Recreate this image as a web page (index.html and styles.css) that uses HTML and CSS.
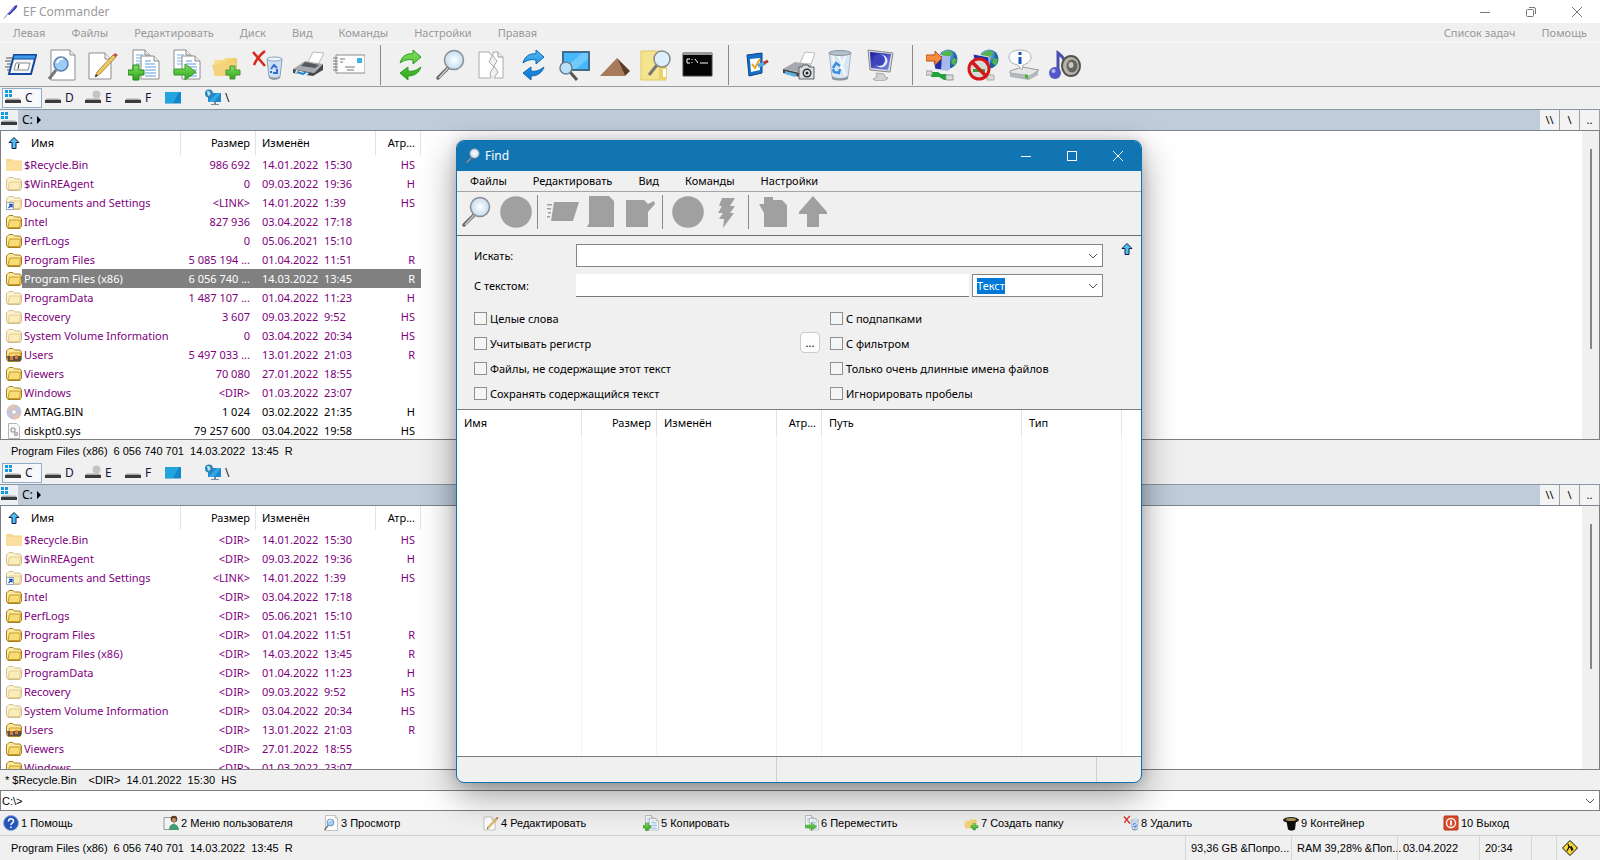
FILE: index.html
```html
<!DOCTYPE html>
<html lang="ru">
<head>
<meta charset="utf-8">
<title>EF Commander</title>
<link rel="stylesheet" href="styles.css">
</head>
<body>
<svg class="sprite" aria-hidden="true">
  <defs>
    <linearGradient id="gGreen" x1="0" y1="0" x2="0" y2="1"><stop offset="0" stop-color="#7de25c"/><stop offset="1" stop-color="#2fa51c"/></linearGradient>
    <linearGradient id="gBlue" x1="0" y1="0" x2="0" y2="1"><stop offset="0" stop-color="#4db8f5"/><stop offset="1" stop-color="#0a72cc"/></linearGradient>
    <linearGradient id="gFold" x1="0" y1="0" x2="1" y2="1"><stop offset="0" stop-color="#fbe69a"/><stop offset="1" stop-color="#e9b93c"/></linearGradient>
    <linearGradient id="gNight" x1="0" y1="0" x2="1" y2="1"><stop offset="0" stop-color="#16189a"/><stop offset="1" stop-color="#7f8ce8"/></linearGradient>
    <radialGradient id="gLens"><stop offset="0" stop-color="#ffffff"/><stop offset="1" stop-color="#c3ddf1"/></radialGradient>
    <radialGradient id="gGlobe" cx=".4" cy=".3"><stop offset="0" stop-color="#9fe0f5"/><stop offset="1" stop-color="#1560a8"/></radialGradient>
  </defs>
  <symbol id="pen" viewBox="0 0 16 16"><path d="M1 14.500 5 9.500" stroke="#8a93a8" stroke-width="1"/><path d="M4.500 10 11.500 2 14.500 1 13.500 4 6.500 11Z" fill="#2c35b5"/><path d="m6 9 6-6" stroke="#8f9bf0" stroke-width=".8"/></symbol>
  <symbol id="run" viewBox="0 0 32 32"><path d="M1 9h6M0 12h6M2 15h4M0 18h5M2 21h3" stroke="#555"/><path d="M9 6h22l-5 19H4z" fill="#f4f8fc" stroke="#17479c" stroke-width="2"/><path d="M9 6h22l-1 4H8z" fill="#3d9be8" stroke="#17479c"/><path d="M11 14h14l-2 7H9z" fill="#fff" stroke="#888"/><path d="m14 15-1 5" stroke="#333"/></symbol>
  <symbol id="view" viewBox="0 0 32 32"><path d="M5 1h19l5 5v25H5z" fill="#fff" stroke="#8c8c8c"/><path d="M24 1v5h5" fill="#eee" stroke="#8c8c8c"/><path d="M3 30 10 21" stroke="#777" stroke-width="3"/><circle cx="15" cy="15" r="7" fill="#9ccdf6" stroke="#5b7ea6" stroke-width="1.500"/><path d="M11 14a5 5 0 0 1 6-4" stroke="#fff" stroke-width="2" fill="none"/></symbol>
  <symbol id="edit" viewBox="0 0 32 32"><path d="M2 4h16l6 6v20H2z" fill="#fff" stroke="#8c8c8c"/><path d="M18 4v6h6" fill="#eee" stroke="#8c8c8c"/><path d="m8 28 2-5L26 6l3 2-16 17z" fill="#f2c75c" stroke="#8f7434" stroke-width=".8"/><path d="m26 6 2-2 3 2-2 2z" fill="#c8504a"/><path d="m8 28 1-3 2 2z" fill="#333"/></symbol>
  <symbol id="pages" viewBox="0 0 32 32"><path d="M5 1h12l5 5v18H5z" fill="#fff" stroke="#8c8c8c"/><path d="M17 1v5h5" fill="#eee" stroke="#8c8c8c"/><path d="M8 6h7M8 9h11M8 12h11M8 15h8" stroke="#7fb0e4"/><path d="M13 7h13l5 5v18H13z" fill="#fff" stroke="#8c8c8c"/><path d="M26 7v5h5" fill="#eee" stroke="#8c8c8c"/><path d="M17 12h6M17 15h10M17 18h11M17 21h11M17 24h11M17 27h11" stroke="#5b9be0"/></symbol>
  <symbol id="copy" viewBox="0 0 32 32"><use href="#pages"/><path d="M5 16h6v5h5v5h-5v5H5v-5H0v-5h5z" fill="url(#gGreen)" stroke="#23861a"/></symbol>
  <symbol id="move" viewBox="0 0 32 32"><use href="#pages"/><path d="M5 20h11v-5l11 8-11 8v-5H5z" fill="url(#gGreen)" stroke="#3b9a30"/></symbol>
  <symbol id="newdir" viewBox="0 0 32 32"><path d="M4 11h9l3-2h11v17H4z" fill="url(#gFold)"/><path d="m2 16 24-3v14H5z" fill="#f4d27c"/><path d="M20 17h5v4h5v5h-5v4h-5v-4h-4v-5h4z" fill="url(#gGreen)" stroke="#4a9440"/></symbol>
  <symbol id="bin" viewBox="0 0 32 32"><path d="M5 4h22l-3 24c-4 3-12 3-16 0z" fill="#d9e5f1" stroke="#a9b7c5"/><path d="m9 6 2 18M14 6l4 8-3 12M22 6l-4 10 3 10" stroke="#f4f9fd" stroke-width="2" fill="none"/><ellipse cx="16" cy="4" rx="11" ry="2.500" fill="#b4bfca" stroke="#8a97a3"/><path d="m9 19 3-5 4 3M16 20l-1 4-5-1-1-3" fill="none" stroke="#3a8ee0" stroke-width="2.500"/><path d="M8 27c4 3 12 3 16 0v3c-4 2-12 2-16 0z" fill="#8d97a0"/></symbol>
  <symbol id="delete" viewBox="0 0 32 32"><path d="m2 3 12 14M14 2C9 6 5 11 3 16" stroke="#d8281e" stroke-width="2.500" fill="none"/><path d="M16 10h15l-2 18c-3 3-9 3-11 0z" fill="#cfe0f5" stroke="#8ba2bb"/><ellipse cx="23.500" cy="10" rx="7.500" ry="2" fill="#eef4fb" stroke="#8ba2bb"/><path d="m20 20 3-4 3 3M26 20v4h-4M20 22v2" stroke="#2f6fd0" stroke-width="2" fill="none"/><path d="M18 27c3 2 8 2 11 0v2c-3 2-8 2-11 0z" fill="#9098a0"/></symbol>
  <symbol id="print" viewBox="0 0 32 32"><path d="m16 13 5-10 11 1-6 12z" fill="#fff" stroke="#bbb"/><path d="m1 20 12-8 18 3-9 9z" fill="#a5a9ad"/><path d="m13 13 14 3-4 3-14-2z" fill="#55595e"/><path d="m1 20 21 4 9-9v6l-10 6-20-3z" fill="#44474c"/><path d="m4 21 13 3-3 3-11-3z" fill="#dff0fb"/><path d="m5 23 6 2 3-2" stroke="#2284cc" stroke-width="2" fill="none"/></symbol>
  <symbol id="mail" viewBox="0 0 32 32"><path d="M3 6h29v18H3z" fill="#fdfdfd" stroke="#8c8c8c"/><path d="M0 9h5M0 12h5M0 15h5M0 18h5M0 21h5M7 10h5M7 13h3M12 18h10M14 21h7" stroke="#777"/><path d="M24 9h5v5h-5z" fill="#3eb2e4"/></symbol>
  <symbol id="cycle" viewBox="0 0 32 32"><path d="M6 14C8 7 13 4 19 5V1l8 7-8 7v-4c-5-1-9 0-13 3zM27 18c-2 6-7 9-13 9v4L6 24l8-6v4c5 1 9-1 13-4z"/></symbol>
  <symbol id="lens" viewBox="0 0 32 32"><path d="M3 29 14 18" stroke="#666" stroke-width="3.500" stroke-linecap="round"/><path d="M4 29 13 19" stroke="#ccc" stroke-width="1.500"/><circle cx="19" cy="11" r="9.500" fill="url(#gLens)" stroke="#8a8d92" stroke-width="1.500"/></symbol>
  <symbol id="split" viewBox="0 0 32 32"><path d="M3 3h10l3 4-3 6 5 5-4 6 1 5H3z" fill="#fff" stroke="#aaa"/><path d="M17 3h5l5 5v21h-9l4-6-4-6 3-5-4-5z" fill="#fff" stroke="#aaa"/><path d="M22 3v5h5" fill="#eee" stroke="#999"/></symbol>
  <symbol id="desk" viewBox="0 0 32 32"><path d="M5 3h26v18H5z" fill="#46b7fa" stroke="#426c8c" stroke-width="2"/><path d="M6 20 24 4h6v6L18 20z" fill="#6fcafd"/><path d="m12 23 7 8" stroke="#555" stroke-width="3"/><circle cx="8" cy="19" r="6" fill="#b8e1f8" stroke="#6b7f90" stroke-width="1.500"/></symbol>
  <symbol id="pyramid" viewBox="0 0 32 32"><path d="M18 9 1 27h25z" fill="#a8795a"/><path d="m18 9 13 13-5 5z" fill="#5c3c26"/></symbol>
  <symbol id="foldfind" viewBox="0 0 32 32"><path d="M1 2h18l7 4v25H1z" fill="#f4e48e" stroke="#ddc865"/><path d="M19 12h8v16l-4 3h-4z" fill="#e9d267"/><path d="M23 20h3v8h-3z" fill="#fff"/><path d="m9 26 8-10" stroke="#777" stroke-width="3"/><circle cx="22" cy="10" r="8" fill="#dceffa" stroke="#888" stroke-width="1.500"/></symbol>
  <symbol id="console" viewBox="0 0 32 32"><path d="M2 4h29v23H2z" fill="#050505" stroke="#444"/><path d="M2 4h29v2H2z" fill="#999"/><path d="M9 10H6v4h3M11 10v1M11 13v1M14 10l3 4M19 14h8" stroke="#fff" fill="none"/></symbol>
  <symbol id="check" viewBox="0 0 32 32"><path d="m5 6 15-2v20L7 27z" fill="#1671c8" stroke="#0d3f82"/><path d="m8 10 10-1v12L9 23z" fill="#fff"/><path d="m10 15 3 4 5-9" stroke="#e8a520" stroke-width="2" fill="none"/><path d="m16 17 7-3" stroke="#5ba3dc" stroke-width="4"/><path d="m22 14 4-2" stroke="#b6362c" stroke-width="3"/></symbol>
  <symbol id="printcam" viewBox="0 0 32 32"><path d="m17 14 5-11 10 1-4 11z" fill="#fff" stroke="#bbb"/><path d="m0 20 12-7 17 3-9 8z" fill="#a5a9ad"/><path d="m0 20 17 4v4L0 24z" fill="#444"/><path d="m2 22 12 3-2 3-10-3z" fill="#5db0e6"/><path d="M16 18h3l1-2h5l1 2h5v12H16z" fill="#d9dde1" stroke="#5d6268"/><circle cx="24" cy="24" r="4.500" fill="#333"/><circle cx="24" cy="24" r="3" fill="#e2e6ea"/><circle cx="24" cy="24" r="1.500" fill="#222"/></symbol>
  <symbol id="monitor" viewBox="0 0 32 32"><path d="m11 24 8 1 1 3 3 1c0 3-13 4-15 1l4-2z" fill="#d0d3d6" stroke="#aaa"/><path d="m3 1 25 3-3 19-20-2z" fill="#d9dce0" stroke="#888"/><path d="m5 3 21 2-3 16-17-2z" fill="url(#gNight)"/><circle cx="16" cy="12" r="6.500" fill="#e2e8ff"/><circle cx="14" cy="11" r="6" fill="#3e44bb"/></symbol>
  <symbol id="globe" viewBox="0 0 32 32"><circle cx="22" cy="10" r="9.500" fill="url(#gGlobe)"/><path d="M16 4c4-3 8-3 11 0l-4 4-4 5-4-2zM27 9l4 1-2 7-4-3z" fill="#55b34a"/><path d="m6 5 16 3v14L9 20z" fill="#1d2fa8" stroke="#dfe3ea"/></symbol>
  <symbol id="netgo" viewBox="0 0 32 32"><use href="#globe"/><path d="M16 7h8v14h-9z" fill="#a9b8ee"/><path d="M0 6h9V2l7 7-7 7v-4H0z" fill="#f58a3c" stroke="#c7521a"/><path d="M5 23h7l3 2h5l4 3v3h-6l-5-3H5z" fill="#1fa43b"/><path d="M0 22h6v4H0zM20 26h7v5h-7z" fill="#d8dcd8" stroke="#999"/></symbol>
  <symbol id="netno" viewBox="0 0 32 32"><use href="#globe"/><path d="M20 26h7v5h-7z" fill="#d8dcd8" stroke="#aaa"/><circle cx="12" cy="20" r="10" fill="#d8dcd6" stroke="#d3191c" stroke-width="3"/><path d="M6 20h12v3H6z" fill="#2fa53b"/><path d="m5 13 14 14" stroke="#d3191c" stroke-width="3.500"/></symbol>
  <symbol id="info" viewBox="0 0 32 32"><path d="m2 22 12-4 17 3-9 6-20-3z" fill="#e5e7e8" stroke="#999"/><path d="m2 24 19 3 9-5v4l-9 5-19-3z" fill="#b4b8ba"/><path d="m17 25 3 1v4l-3-1z" fill="#49b53a"/><path d="M12 1c7 0 11 3 11 7s-4 7-8 8l-1 5-4-5C4 15 1 12 1 8s4-7 11-7z" fill="#fbfcfd" stroke="#aab0b5"/><path d="M12 3v3M12 8v7" stroke="#1f55b5" stroke-width="3"/></symbol>
  <symbol id="audio" viewBox="0 0 32 32"><path d="M9 24V4c4 3 7 6 7 11" fill="none" stroke="#4c4fae" stroke-width="3"/><circle cx="6" cy="24" r="6" fill="#5457c5"/><circle cx="4.500" cy="22" r="2" fill="#b8baf4"/><ellipse cx="22" cy="17" rx="9" ry="10" fill="#b6b4ac" stroke="#55534e" stroke-width="2"/><ellipse cx="23" cy="17" rx="5.500" ry="6.500" fill="#66645f"/><ellipse cx="22" cy="16" rx="2.500" ry="3" fill="#c8c6bf"/></symbol>
  <symbol id="drive" viewBox="0 0 16 16"><path d="M2 9.500h12l2 1.500H0z" fill="#aaa"/><path d="M0 11h16v3H0z" fill="#3b3b3b"/></symbol>
  <symbol id="drivec" viewBox="0 0 16 16"><use href="#drive"/><path d="M0 1h3v3H0zM4 1h3v3H4zM0 5h3v3H0zM4 5h3v3H4z" fill="#149ae0"/></symbol>
  <symbol id="drivee" viewBox="0 0 16 16"><use href="#drive"/><circle cx="11.500" cy="5.500" r="4" fill="#c4c4c4"/></symbol>
  <symbol id="screen" viewBox="0 0 16 16"><path d="M0 3h16v11.500H0z" fill="#1188cc"/><path d="M0 3h14L8 14H0z" fill="#24a4dc"/></symbol>
  <symbol id="net" viewBox="0 0 16 16"><path d="M3 4h13v9H3z" fill="#1889d0"/><path d="m3 13 9-9h4L9 13z" fill="#35a5e0"/><path d="M9 13h2v2h3v1H6v-1h3z" fill="#7c8c99"/><circle cx="4" cy="4.500" r="4" fill="#2f84b8"/><path d="M2 2c3 0 4 2 3 4L3 7z" fill="#b8e2f2"/></symbol>
  <symbol id="up" viewBox="0 0 12 12"><path d="m6 .5 5 5H8v6H4v-6H1z" fill="#4fc0f5" stroke="#101f48"/></symbol>
  <symbol id="fold" viewBox="0 0 16 16"><path d="M.5 12V4L3 1.500h4L8.500 3H14l1.500 2v7L14 14.500H2z" fill="#fbe9a0" stroke="#a8801c"/><path d="M3.500 6h11l-1 7.500H2z" fill="#f8dc78" stroke="#c79a2b"/></symbol>
  <symbol id="plain" viewBox="0 0 16 16"><path d="M0 2h6l1.500 1.500H16V14H0z" fill="#f7d791"/><path d="M0 5h16v9H0z" fill="#fbdf9f"/></symbol>
  <symbol id="link" viewBox="0 0 16 16"><use href="#fold" opacity=".5"/><path d="M.5 7.500h7v7h-7z" fill="#fff" stroke="#8fa5c5"/><path d="M2.500 13 5.500 10M3 9.500h3v3" stroke="#1c50b0" stroke-width="1.300" fill="none"/></symbol>
  <symbol id="users" viewBox="0 0 16 16"><use href="#fold"/><path d="M1 9h14v5H2z" fill="#54504c"/><path d="M4 9h3v4H4zM9 8h3v4H9z" fill="#dc7a3c"/></symbol>
  <symbol id="disc" viewBox="0 0 16 16"><circle cx="8" cy="8" r="7.500" fill="#c6c6d8"/><path d="M8 8 2 3.500A7.500 7.500 0 0 1 8 .5zM8 8l6 4.500a7.500 7.500 0 0 1-6 3z" fill="#e8c3a8"/><circle cx="8" cy="8" r="2.300" fill="#fff" stroke="#aaa" stroke-width=".6"/></symbol>
  <symbol id="sys" viewBox="0 0 16 16"><path d="M2.500.5h8l3 3v12h-11z" fill="#fafafa" stroke="#b5b5b5"/><circle cx="7" cy="7" r="2" fill="none" stroke="#aaa" stroke-width="1.500"/><circle cx="10" cy="11" r="1.500" fill="none" stroke="#aaa" stroke-width="1.500"/></symbol>
  <symbol id="help" viewBox="0 0 16 16"><circle cx="8" cy="8" r="7.500" fill="#2456b8" stroke="#92abd8"/><path d="M5.500 6.500C5.500 3 10.500 3 10.500 6 10.500 8 8 8 8 10M8 11.500V13" stroke="#fff" stroke-width="1.600" fill="none"/></symbol>
  <symbol id="usermenu" viewBox="0 0 16 16"><path d="M1 2.500h10v12H1z" fill="#f3f3f3" stroke="#999"/><circle cx="11" cy="4" r="3.300" fill="#5d3c24"/><circle cx="11" cy="5" r="2" fill="#c98f66"/><path d="M6 15c0-8 9-8 10 0z" fill="#3f9b74"/></symbol>
  <symbol id="hat" viewBox="0 0 16 16"><ellipse cx="8" cy="5" rx="8" ry="3" fill="#222"/><ellipse cx="8" cy="4.500" rx="5" ry="1.500" fill="#a88c50"/><path d="M3.500 6h9.500l-1 8.500c-2 1.500-5 1.500-7 0z" fill="#0c0c0c"/></symbol>
  <symbol id="power" viewBox="0 0 16 16"><rect x="1" y="1" width="14" height="14" rx="1" fill="#dd4a28" stroke="#b23517"/><circle cx="8" cy="8" r="4.500" fill="none" stroke="#fff" stroke-width="1.300"/><path d="M8 5.500v5" stroke="#fff" stroke-width="1.800"/></symbol>
  <symbol id="works" viewBox="0 0 16 16"><path d="m8 .5 7.500 7.500L8 15.500.5 8z" fill="#f5d832" stroke="#111"/><path d="m6 4 1 3-2 4M6.500 6 9 8l1 3M9 6l2 4" stroke="#111" stroke-width="1.200" fill="none"/></symbol>
  <symbol id="min" viewBox="0 0 12 12"><path d="M1 6.500h10" stroke="currentColor" fill="none"/></symbol>
  <symbol id="restore" viewBox="0 0 12 12"><rect x="1.500" y="3.500" width="7" height="7" rx="1" stroke="currentColor" fill="none"/><path d="M4 1.500h5q1.500 0 1.500 1.500v5" stroke="currentColor" fill="none"/></symbol>
  <symbol id="max" viewBox="0 0 12 12"><rect x="1.500" y="1.500" width="9" height="9" stroke="currentColor" fill="none"/></symbol>
  <symbol id="close" viewBox="0 0 12 12"><path d="m1 1 10 10M11 1 1 11" stroke="currentColor" fill="none"/></symbol>
  <symbol id="chev" viewBox="0 0 10 10"><path d="m1 3 4 4 4-4" stroke="#555" fill="none"/></symbol>
  <symbol id="s-circle" viewBox="0 0 32 32"><circle cx="16" cy="16" r="15.800"/></symbol>
  <symbol id="s-run" viewBox="0 0 32 32"><path d="M7 6h25l-6 19H4zM0 8h5v1.500H0zM0 12h4v1.500H0zM1 16h3v1.500H1zM0 20h3v1.500H0z"/></symbol>
  <symbol id="s-page" viewBox="0 0 32 32"><path d="M3 0h20l5 5v26H1l2-4z"/></symbol>
  <symbol id="s-edit" viewBox="0 0 32 32"><path d="M1 4h18l4 4 6-3 1 3-7 8v15H1z"/></symbol>
  <symbol id="s-bolt" viewBox="0 0 32 32"><path d="M11 2h13l-5 8h5l-5 7h4L12 32l1-9H8l4-6H7l4-7H8z"/></symbol>
  <symbol id="s-dir" viewBox="0 0 32 32"><path d="M6 1h9v3h9l5 5v22H6V17L1 8h5z"/></symbol>
  <symbol id="s-up" viewBox="0 0 32 32"><path d="m16 0 14 16v2h-8v13H10V18H2v-2z"/></symbol>
</svg>

<div class="app">
  <header class="titlebar">
    <svg class="i16"><use href="#pen"/></svg><span class="title">EF Commander</span>
    <button class="winbtn" aria-label="Свернуть"><svg class="i12"><use href="#min"/></svg></button>
    <button class="winbtn" aria-label="Восстановить"><svg class="i12"><use href="#restore"/></svg></button>
    <button class="winbtn" aria-label="Закрыть"><svg class="i12"><use href="#close"/></svg></button>
  </header>
  <nav class="menu menu-dim">
    <button>Левая</button><button>Файлы</button><button>Редактировать</button><button>Диск</button><button>Вид</button><button>Команды</button><button>Настройки</button><button>Правая</button><span class="grow"></span><button>Список задач</button><button>Помощь</button>
  </nav>
  <div class="toolbar">
    <button aria-label="Открыть"><svg class="i32"><use href="#run"/></svg></button>
    <button aria-label="Просмотр"><svg class="i32"><use href="#view"/></svg></button>
    <button aria-label="Редактировать"><svg class="i32"><use href="#edit"/></svg></button>
    <button aria-label="Копировать"><svg class="i32"><use href="#copy"/></svg></button>
    <button aria-label="Переместить"><svg class="i32"><use href="#move"/></svg></button>
    <button aria-label="Создать папку"><svg class="i32"><use href="#newdir"/></svg></button>
    <button aria-label="Удалить"><svg class="i32"><use href="#delete"/></svg></button>
    <button aria-label="Печать"><svg class="i32"><use href="#print"/></svg></button>
    <button aria-label="Почта"><svg class="i32"><use href="#mail"/></svg></button>
    <span class="sep"></span>
    <button aria-label="Обновить"><svg class="i32 green"><use href="#cycle"/></svg></button>
    <button aria-label="Поиск"><svg class="i32"><use href="#lens"/></svg></button>
    <button aria-label="Разделить"><svg class="i32"><use href="#split"/></svg></button>
    <button aria-label="Синхронизация"><svg class="i32 blue"><use href="#cycle"/></svg></button>
    <button aria-label="Рабочий стол"><svg class="i32"><use href="#desk"/></svg></button>
    <button aria-label="Дерево"><svg class="i32"><use href="#pyramid"/></svg></button>
    <button aria-label="Поиск в папке"><svg class="i32"><use href="#foldfind"/></svg></button>
    <button aria-label="Консоль"><svg class="i32"><use href="#console"/></svg></button>
    <span class="sep"></span>
    <button aria-label="Панель управления"><svg class="i32"><use href="#check"/></svg></button>
    <button aria-label="Принтеры"><svg class="i32"><use href="#printcam"/></svg></button>
    <button aria-label="Корзина"><svg class="i32"><use href="#bin"/></svg></button>
    <button aria-label="Заставка"><svg class="i32"><use href="#monitor"/></svg></button>
    <span class="sep"></span>
    <button aria-label="Подключить"><svg class="i32"><use href="#netgo"/></svg></button>
    <button aria-label="Отключить"><svg class="i32"><use href="#netno"/></svg></button>
    <button aria-label="О диске"><svg class="i32"><use href="#info"/></svg></button>
    <button aria-label="Звук"><svg class="i32"><use href="#audio"/></svg></button>
  </div>

  <section class="pane pane-top">
    <div class="drives">
      <button class="on"><svg class="i16"><use href="#drivec"/></svg>C</button><button><svg class="i16"><use href="#drive"/></svg>D</button><button><svg class="i16"><use href="#drivee"/></svg>E</button><button><svg class="i16"><use href="#drive"/></svg>F</button><button aria-label="Рабочий стол"><svg class="i16"><use href="#screen"/></svg></button><button><svg class="i16"><use href="#net"/></svg>\</button>
    </div>
    <div class="path"><svg class="pathicon"><use href="#drivec"/></svg><span class="crumb">C:<i class="tri"></i></span><button>\\</button><button>\</button><button>..</button></div>
    <div class="list">
      <div class="scroller">
      <table class="files">
        <colgroup><col class="c-name"><col class="c-size"><col class="c-date"><col class="c-attr"></colgroup>
        <thead><tr><th><svg class="i12"><use href="#up"/></svg>Имя</th><th class="r">Размер</th><th>Изменён</th><th class="r">Атр...</th></tr></thead>
        <tbody>
        <tr><td><svg class="i16"><use href="#plain"/></svg><span>$Recycle.Bin</span></td><td>986 692</td><td>14.01.2022&nbsp; 15:30</td><td>HS</td></tr>
        <tr><td><svg class="i16 faint"><use href="#fold"/></svg><span>$WinREAgent</span></td><td>0</td><td>09.03.2022&nbsp; 19:36</td><td>H</td></tr>
        <tr><td><svg class="i16"><use href="#link"/></svg><span>Documents and Settings</span></td><td>&lt;LINK&gt;</td><td>14.01.2022&nbsp; 1:39</td><td>HS</td></tr>
        <tr><td><svg class="i16"><use href="#fold"/></svg><span>Intel</span></td><td>827 936</td><td>03.04.2022&nbsp; 17:18</td><td></td></tr>
        <tr><td><svg class="i16"><use href="#fold"/></svg><span>PerfLogs</span></td><td>0</td><td>05.06.2021&nbsp; 15:10</td><td></td></tr>
        <tr><td><svg class="i16"><use href="#fold"/></svg><span>Program Files</span></td><td>5 085 194 ...</td><td>01.04.2022&nbsp; 11:51</td><td>R</td></tr>
        <tr class="sel"><td><svg class="i16"><use href="#fold"/></svg><span>Program Files (x86)</span></td><td>6 056 740 ...</td><td>14.03.2022&nbsp; 13:45</td><td>R</td></tr>
        <tr><td><svg class="i16 faint"><use href="#fold"/></svg><span>ProgramData</span></td><td>1 487 107 ...</td><td>01.04.2022&nbsp; 11:23</td><td>H</td></tr>
        <tr><td><svg class="i16 faint"><use href="#fold"/></svg><span>Recovery</span></td><td>3 607</td><td>09.03.2022&nbsp; 9:52</td><td>HS</td></tr>
        <tr><td><svg class="i16 faint"><use href="#fold"/></svg><span>System Volume Information</span></td><td>0</td><td>03.04.2022&nbsp; 20:34</td><td>HS</td></tr>
        <tr><td><svg class="i16"><use href="#users"/></svg><span>Users</span></td><td>5 497 033 ...</td><td>13.01.2022&nbsp; 21:03</td><td>R</td></tr>
        <tr><td><svg class="i16"><use href="#fold"/></svg><span>Viewers</span></td><td>70 080</td><td>27.01.2022&nbsp; 18:55</td><td></td></tr>
        <tr><td><svg class="i16"><use href="#fold"/></svg><span>Windows</span></td><td>&lt;DIR&gt;</td><td>01.03.2022&nbsp; 23:07</td><td></td></tr>
        <tr class="file"><td><svg class="i16"><use href="#disc"/></svg><span>AMTAG.BIN</span></td><td>1 024</td><td>03.02.2022&nbsp; 21:35</td><td>H</td></tr>
        <tr class="file"><td><svg class="i16"><use href="#sys"/></svg><span>diskpt0.sys</span></td><td>79 257 600</td><td>03.04.2022&nbsp; 19:58</td><td>HS</td></tr>
        </tbody>
      </table>
      </div>
      <div class="track"><div class="thumb thumb-top"></div></div>
    </div>
    <div class="pstatus"><span>Program Files (x86)</span><span>6 056 740 701&nbsp; 14.03.2022&nbsp; 13:45&nbsp; R</span></div>
  </section>

  <section class="pane pane-bottom">
    <div class="drives">
      <button class="on"><svg class="i16"><use href="#drivec"/></svg>C</button><button><svg class="i16"><use href="#drive"/></svg>D</button><button><svg class="i16"><use href="#drivee"/></svg>E</button><button><svg class="i16"><use href="#drive"/></svg>F</button><button aria-label="Рабочий стол"><svg class="i16"><use href="#screen"/></svg></button><button><svg class="i16"><use href="#net"/></svg>\</button>
    </div>
    <div class="path"><svg class="pathicon"><use href="#drivec"/></svg><span class="crumb">C:<i class="tri"></i></span><button>\\</button><button>\</button><button>..</button></div>
    <div class="list">
      <div class="scroller">
      <table class="files">
        <colgroup><col class="c-name"><col class="c-size"><col class="c-date"><col class="c-attr"></colgroup>
        <thead><tr><th><svg class="i12"><use href="#up"/></svg>Имя</th><th class="r">Размер</th><th>Изменён</th><th class="r">Атр...</th></tr></thead>
        <tbody>
        <tr><td><svg class="i16"><use href="#plain"/></svg><span>$Recycle.Bin</span></td><td>&lt;DIR&gt;</td><td>14.01.2022&nbsp; 15:30</td><td>HS</td></tr>
        <tr><td><svg class="i16 faint"><use href="#fold"/></svg><span>$WinREAgent</span></td><td>&lt;DIR&gt;</td><td>09.03.2022&nbsp; 19:36</td><td>H</td></tr>
        <tr><td><svg class="i16"><use href="#link"/></svg><span>Documents and Settings</span></td><td>&lt;LINK&gt;</td><td>14.01.2022&nbsp; 1:39</td><td>HS</td></tr>
        <tr><td><svg class="i16"><use href="#fold"/></svg><span>Intel</span></td><td>&lt;DIR&gt;</td><td>03.04.2022&nbsp; 17:18</td><td></td></tr>
        <tr><td><svg class="i16"><use href="#fold"/></svg><span>PerfLogs</span></td><td>&lt;DIR&gt;</td><td>05.06.2021&nbsp; 15:10</td><td></td></tr>
        <tr><td><svg class="i16"><use href="#fold"/></svg><span>Program Files</span></td><td>&lt;DIR&gt;</td><td>01.04.2022&nbsp; 11:51</td><td>R</td></tr>
        <tr><td><svg class="i16"><use href="#fold"/></svg><span>Program Files (x86)</span></td><td>&lt;DIR&gt;</td><td>14.03.2022&nbsp; 13:45</td><td>R</td></tr>
        <tr><td><svg class="i16 faint"><use href="#fold"/></svg><span>ProgramData</span></td><td>&lt;DIR&gt;</td><td>01.04.2022&nbsp; 11:23</td><td>H</td></tr>
        <tr><td><svg class="i16 faint"><use href="#fold"/></svg><span>Recovery</span></td><td>&lt;DIR&gt;</td><td>09.03.2022&nbsp; 9:52</td><td>HS</td></tr>
        <tr><td><svg class="i16 faint"><use href="#fold"/></svg><span>System Volume Information</span></td><td>&lt;DIR&gt;</td><td>03.04.2022&nbsp; 20:34</td><td>HS</td></tr>
        <tr><td><svg class="i16"><use href="#users"/></svg><span>Users</span></td><td>&lt;DIR&gt;</td><td>13.01.2022&nbsp; 21:03</td><td>R</td></tr>
        <tr><td><svg class="i16"><use href="#fold"/></svg><span>Viewers</span></td><td>&lt;DIR&gt;</td><td>27.01.2022&nbsp; 18:55</td><td></td></tr>
        <tr><td><svg class="i16"><use href="#fold"/></svg><span>Windows</span></td><td>&lt;DIR&gt;</td><td>01.03.2022&nbsp; 23:07</td><td></td></tr>
        </tbody>
      </table>
      </div>
      <div class="track"><div class="thumb thumb-bottom"></div></div>
    </div>
    <div class="pstatus marked"><span>* $Recycle.Bin</span><span>&lt;DIR&gt;&nbsp; 14.01.2022&nbsp; 15:30&nbsp; HS</span></div>
  </section>

  <div class="cmd"><label for="cmd">C:\&gt;</label><input id="cmd" type="text"><svg class="i10"><use href="#chev"/></svg></div>
  <div class="fkeys">
    <button><svg class="i16"><use href="#help"/></svg>1 Помощь</button>
    <button><svg class="i16"><use href="#usermenu"/></svg>2 Меню пользователя</button>
    <button><svg class="i16"><use href="#view"/></svg>3 Просмотр</button>
    <button><svg class="i16"><use href="#edit"/></svg>4 Редактировать</button>
    <button><svg class="i16"><use href="#copy"/></svg>5 Копировать</button>
    <button><svg class="i16"><use href="#move"/></svg>6 Переместить</button>
    <button><svg class="i16"><use href="#newdir"/></svg>7 Создать папку</button>
    <button><svg class="i16"><use href="#delete"/></svg>8 Удалить</button>
    <button><svg class="i16"><use href="#hat"/></svg>9 Контейнер</button>
    <button><svg class="i16"><use href="#power"/></svg>10 Выход</button>
  </div>
  <footer class="status">
    <div class="info"><span>Program Files (x86)</span><span>6 056 740 701&nbsp; 14.03.2022&nbsp; 13:45&nbsp; R</span></div>
    <span class="cell w106">93,36 GB &amp;Попро...</span><span class="cell w106">RAM 39,28% &amp;Поп...</span><span class="cell w82">03.04.2022</span><span class="cell w52">20:34</span><span class="cell w25"></span><span class="cell w44"><svg class="i16"><use href="#works"/></svg></span>
  </footer>
</div>

<div class="dialog" role="dialog" aria-label="Find">
  <div class="dtitle">
    <svg class="i16"><use href="#lens"/></svg><span class="title">Find</span>
    <button class="winbtn" aria-label="Свернуть"><svg class="i12"><use href="#min"/></svg></button>
    <button class="winbtn" aria-label="Развернуть"><svg class="i12"><use href="#max"/></svg></button>
    <button class="winbtn" aria-label="Закрыть"><svg class="i12"><use href="#close"/></svg></button>
  </div>
  <nav class="menu dmenu"><button>Файлы</button><button>Редактировать</button><button>Вид</button><button>Команды</button><button>Настройки</button></nav>
  <div class="dtools">
    <button aria-label="Найти"><svg class="i32"><use href="#lens"/></svg></button>
    <button aria-label="Стоп"><svg class="i32"><use href="#s-circle"/></svg></button>
    <span class="sep"></span>
    <button aria-label="Открыть"><svg class="i32"><use href="#s-run"/></svg></button>
    <button aria-label="Просмотр"><svg class="i32"><use href="#s-page"/></svg></button>
    <button aria-label="Правка"><svg class="i32"><use href="#s-edit"/></svg></button>
    <span class="sep"></span>
    <button aria-label="Обзор"><svg class="i32"><use href="#s-circle"/></svg></button>
    <button aria-label="Быстро"><svg class="i32"><use href="#s-bolt"/></svg></button>
    <span class="sep"></span>
    <button aria-label="Папка"><svg class="i32"><use href="#s-dir"/></svg></button>
    <button aria-label="Вверх"><svg class="i32"><use href="#s-up"/></svg></button>
  </div>
  <form class="form">
    <div class="line"><label for="what">Искать:</label><span class="combo"><input id="what" type="text"><svg class="i10"><use href="#chev"/></svg></span><svg class="i12 arrow"><use href="#up"/></svg></div>
    <div class="line"><label for="text">С текстом:</label><input id="text" class="plain" type="text"><span class="combo mode"><select aria-label="Вид текста"><option>Текст</option></select><svg class="i10"><use href="#chev"/></svg></span></div>
    <div class="opts">
      <div class="optcol">
        <label><input type="checkbox">Целые слова</label>
        <label><input type="checkbox">Учитывать регистр</label>
        <label><input type="checkbox">Файлы, не содержащие этот текст</label>
        <label><input type="checkbox">Сохранять содержащийся текст</label>
      </div>
      <button type="button" class="dots">...</button>
      <div class="optcol">
        <label><input type="checkbox">С подпапками</label>
        <label><input type="checkbox">С фильтром</label>
        <label><input type="checkbox">Только очень длинные имена файлов</label>
        <label><input type="checkbox">Игнорировать пробелы</label>
      </div>
    </div>
  </form>
  <table class="results">
    <colgroup><col class="r1"><col class="r2"><col class="r3"><col class="r4"><col class="r5"><col class="r6"><col></colgroup>
    <thead><tr><th>Имя</th><th class="r">Размер</th><th>Изменён</th><th class="r">Атр...</th><th>Путь</th><th>Тип</th><th></th></tr></thead>
    <tbody><tr><td></td><td></td><td></td><td></td><td></td><td></td><td></td></tr></tbody>
  </table>
  <div class="dstatus"><span></span><span></span><span class="last"></span></div>
</div>
</body>
</html>
```
FILE: styles.css
```css
* { box-sizing: border-box; }
html, body { height: 100%; }
body {
  margin: 0;
  background: #f0f0f0;
  color: #000;
  font: 11px/16px "Noto Sans", "Open Sans", sans-serif;
  overflow: hidden;
}
button, input, select { font: inherit; color: inherit; border: 0; padding: 0; margin: 0; background: none; border-radius: 0; }
input { outline: 0; min-width: 0; }
.sprite { position: absolute; width: 0; height: 0; }
.i10 { width: 10px; height: 10px; flex: none; }
.i12 { width: 12px; height: 12px; flex: none; }
.i16 { width: 16px; height: 16px; flex: none; }
.i32 { width: 32px; height: 32px; flex: none; }
.green { fill: url(#gGreen); stroke: #2c9a20; }
.blue { fill: url(#gBlue); stroke: #0b68b8; }
.faint { opacity: .5; }
.grow { flex: 1; }

.app { display: flex; flex-direction: column; height: 100vh; }

.titlebar { display: flex; align-items: center; height: 23px; padding-left: 3px; background: #fff; color: #999; }
.title { flex: 1; padding-left: 4px; font-size: 12px; }
.winbtn { display: flex; align-items: center; justify-content: center; width: 46px; height: 22px; }
.titlebar .winbtn { color: #777; }

.menu { display: flex; align-items: center; height: 20px; }
.menu button { padding: 0 13px; white-space: nowrap; }
.menu-dim { color: #999; border-bottom: 1px solid #fafafa; }

.toolbar { display: flex; align-items: center; height: 44px; border-bottom: 1px solid #999; }
.toolbar button { display: flex; align-items: center; justify-content: center; width: 41px; height: 42px; }
.toolbar .sep { width: 20px; height: 40px; background: linear-gradient(#888, #888) 11px 0 / 1px 100% no-repeat; }

.pane { display: flex; flex-direction: column; min-height: 0; }
.pane-top { flex: 375 1 0; }
.pane-bottom { flex: 328 1 0; }
.drives { display: flex; align-items: center; height: 22px; padding-left: 2px; flex: none; font-size: 12px; }
.drives button { display: flex; align-items: center; gap: 4px; width: 40px; height: 20px; padding-left: 2px; border: 1px solid transparent; color: #101840; }
.drives button.on { border-color: #8fadc9; background: #f8f8f8; }
.drives svg { margin-bottom: 2px; }

.path { display: flex; height: 22px; flex: none; border-top: 1px solid #8a96a3; border-bottom: 1px solid #7c858e; background: #c0ccda; }
.pathicon { width: 18px; height: 20px; padding: 1px 1px 3px; background: #eef1f4; }
.crumb { flex: 1; display: flex; align-items: center; gap: 4px; padding-left: 4px; font-size: 12px; }
.tri { border: solid transparent; border-width: 4px 0 4px 4px; border-left-color: #000; }
.path button { width: 20px; background: #f3f3f3; border-right: 1px solid #a0a0a0; }

.list { display: flex; flex: 1; min-height: 0; background: #fff; border: solid #7e7e7e; border-width: 0 1px 1px; }
.scroller { flex: 1; overflow: hidden; }
.track { width: 17px; background: #f0f0f0; display: flex; justify-content: center; }
.thumb { width: 2px; background: #858585; }
.thumb-top { margin-top: 18px; height: 200px; }
.thumb-bottom { margin-top: 18px; height: 145px; }

table { border-spacing: 0; table-layout: fixed; }
th { font-weight: 400; text-align: left; padding: 0; }
th.r { text-align: right; }
.files { width: 420px; }
.c-name { width: 180px; }
.c-size { width: 75px; }
.c-date { width: 120px; }
.c-attr { width: 45px; }
.files th { height: 24px; padding: 0 5px 0 6px; border-right: 1px solid #e3e3e3; white-space: nowrap; }
.files th svg { margin: 0 11px -2px 1px; }
.files td { height: 19px; padding: 0 6px 0 6px; white-space: nowrap; color: #800080; }
.files td:first-child { display: flex; align-items: center; gap: 2px; padding-left: 5px; }
.files td:nth-child(even) { text-align: right; }
.files .file td { color: #000; }
.files .sel td { background: #808080; color: #fff; }
.files .sel td:first-child { background: linear-gradient(#808080, #808080) 21px 0 no-repeat; }

.pstatus, .cmd, .fkeys, .status { font: 11px/14px "Liberation Sans", Arial, sans-serif; }
.pstatus { display: flex; align-items: center; gap: 6px; height: 22px; padding-left: 11px; flex: none; }
.marked { gap: 12px; height: 20px; padding-left: 5px; }

.cmd { display: flex; align-items: center; height: 21px; padding: 0 4px 0 1px; background: #fff; border: 1px solid #7e7e7e; }
.cmd input { flex: 1; }
.fkeys { display: grid; grid-template-columns: repeat(10, 1fr); height: 24px; }
.fkeys button { display: flex; align-items: center; gap: 2px; padding-left: 3px; }
.status { display: flex; height: 25px; border-top: 1px solid #d0d0d0; }
.info { flex: 1; display: flex; align-items: center; gap: 6px; padding-left: 11px; }
.cell { display: flex; align-items: center; padding-left: 5px; border-left: 1px solid #d5d5d5; white-space: nowrap; }
.w106 { width: 106px; }
.w82 { width: 82px; }
.w52 { width: 52px; }
.w25 { width: 25px; }
.w44 { width: 44px; }

.dialog {
  position: absolute;
  top: 140px;
  right: 458px;
  bottom: 77px;
  left: 456px;
  display: flex;
  flex-direction: column;
  overflow: hidden;
  background: #f0f0f0;
  border: 1px solid #1272ad;
  border-radius: 8px;
  box-shadow: 0 12px 36px rgba(0, 0, 0, .4), 0 0 12px rgba(0, 0, 0, .15);
}
.dtitle { display: flex; align-items: center; height: 30px; flex: none; padding-left: 8px; background: #1175b4; color: #fff; }
.dtitle .title { padding-left: 4px; }
.dmenu { height: 21px; flex: none; padding-left: 0; border-bottom: 1px solid #a5a5a5; }
.dtools { display: flex; align-items: center; height: 44px; flex: none; padding-bottom: 4px; border-bottom: 1px solid #6c6c6c; }
.dtools button { display: flex; justify-content: center; width: 39px; fill: #a0a0a0; }
.dtools .sep { width: 8px; height: 34px; background: linear-gradient(#888, #888) 2px 0 / 1px 100% no-repeat; }

.form { flex: none; padding: 8px 38px 3px 17px; }
.line { display: grid; grid-template-columns: 102px 1fr auto; align-items: center; height: 30px; padding-bottom: 7px; }
.line input.plain { height: 23px; margin-right: 3px; background: #fff; border-bottom: 1px solid #777; }
.combo { display: flex; align-items: center; justify-content: space-between; height: 23px; padding: 0 4px; background: #fff; border: 1px solid #858585; }
.combo input { flex: 1; }
.mode { width: 131px; }
.mode select { appearance: none; height: 16px; background: #0078d7; color: #fff; }
.arrow { margin: -14px -30px 0 18px; }
.opts { display: grid; grid-template-columns: 326px 30px 1fr; margin-top: 2px; }
.optcol label { display: flex; align-items: center; gap: 3px; height: 25px; }
.optcol input { appearance: none; width: 13px; height: 13px; background: #f5f5f5; border: 1px solid #909090; }
.dots { width: 20px; height: 21px; margin-top: 26px; background: #fdfdfd; border: 1px solid #ccc; border-radius: 4px; }

.results { width: 100%; flex: 1; background: #fff; border-top: 1px solid #7e7e7e; border-bottom: 1px solid #7e7e7e; }
.results th { height: 26px; padding: 0 5px 0 7px; border-right: 1px solid #e3e3e3; }
.results td { border-right: 1px solid #f3f6f7; }
.results th:last-child, .results td:last-child { border: 0; }
.r1 { width: 125px; }
.r2 { width: 75px; }
.r3 { width: 120px; }
.r4 { width: 45px; }
.r5 { width: 200px; }
.r6 { width: 100px; }
.dstatus { display: grid; grid-template-columns: 1fr 1fr 44px; height: 25px; flex: none; }
.dstatus span { border-right: 1px solid #cfcfcf; }
.dstatus .last { border: 0; }
```
